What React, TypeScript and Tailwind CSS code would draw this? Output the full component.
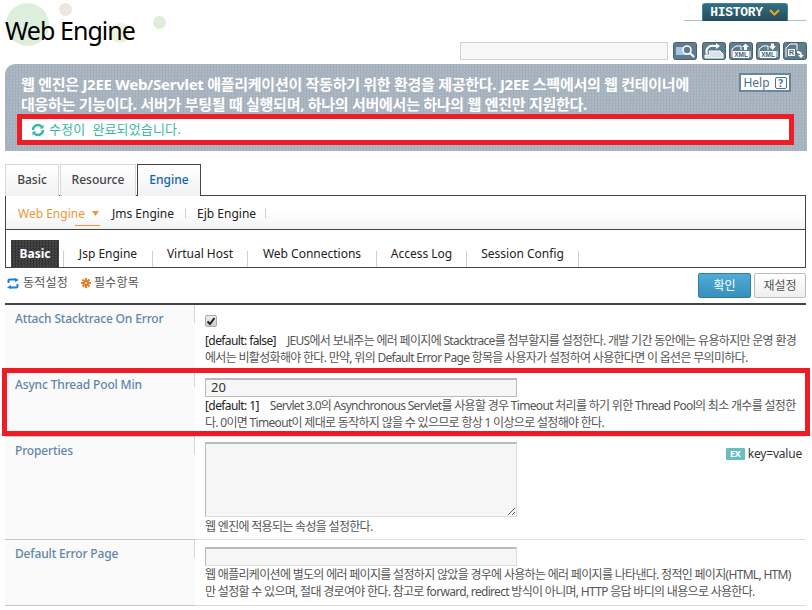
import React from 'react';

const font = { fontFamily: '"Noto Sans", "Noto Sans CJK KR", sans-serif' };

const ToolIcon: React.FC<{ className?: string; children: React.ReactNode }> = ({ className, children }) => (
  <svg width="24" height="18" viewBox="0 0 24 18" className={`shrink-0 ${className ?? ''}`}>
    <rect x="0.5" y="0.5" width="23" height="17" rx="2" fill="#5f7c8e" stroke="#46626f" />
    {children}
  </svg>
);

const XmlGlyph: React.FC<{ up?: boolean }> = ({ up }) => (
  <>
    <path d="M3 15V7l4-3h5v4" fill="none" stroke="#fff" strokeWidth="1" />
    <path d="M21 9v6" stroke="#fff" strokeWidth="1" />
    <rect x="4" y="9" width="16" height="7" fill="#fff" />
    <text x="12" y="15" textAnchor="middle" fontSize="6.5" fontWeight="700" fill="#46626f" fontFamily="Liberation Sans">XML</text>
    {up ? (
      <path d="M16.500 1.500l3.500 3.500h-2V8h-3V5h-2z" fill="#fff" />
    ) : (
      <path d="M15 1.500h3V4h2l-3.500 4L13 4h2z" fill="#fff" />
    )}
  </>
);

const Row: React.FC<{ label: string; className: string; children: React.ReactNode; boxed?: boolean }> = ({ label, className, children, boxed }) => (
  <div className={`relative flex border-b ${className}`}>
    <div className="w-[190px] shrink-0 bg-[#fafafa] flex justify-between border-b border-[#c4c4c4] -mb-px">
      <span className={`pl-[10px] ${boxed ? 'pt-[7px]' : 'pt-[5px]'} text-[12px] leading-[18px] text-[#5f86a8] font-medium tracking-[-0.15px]`}>{label}</span>
      <span className="w-px h-[18px] bg-[#d5d5d5]" />
    </div>
    <div className="flex-1 pl-[10px] min-w-0">{children}</div>
    {boxed && <div className="absolute -left-[3px] -right-[4px] -top-[1px] bottom-0 border-[5px] border-[#ee1c25]" />}
  </div>
);

const desc = 'block whitespace-nowrap text-[12px] leading-[17px] text-[#555] tracking-[-0.69px]';
const tag = 'text-[#222] mr-[11px] tracking-[-0.6px]';
const sep = 'w-px h-[16px] bg-[#d0d0d0]';

export default function App() {
  return (
    <div className="relative w-[812px] h-[610px] overflow-hidden bg-white" style={font}>
      {/* background dots behind the title */}
      <div className="absolute left-[6px] top-[3px] w-[43px] h-[43px] rounded-full bg-[#deeede]" />
      <div className="absolute left-[59px] top-[3px] w-[13px] h-[13px] rounded-full bg-[#f0e6de]" />
      <div className="absolute left-[110px] top-[23px] w-[20px] h-[20px] rounded-full bg-[#eef3dc]" />
      <div className="absolute left-[153px] top-[16px] w-[13px] h-[13px] rounded-full bg-[#dcefd8]" />

      <div className="relative h-[64px]">
        <h1 className="absolute left-[5px] top-[12px] text-[25px] leading-[36px] text-black tracking-[-0.95px]">Web Engine</h1>

        <div className="absolute left-[684px] top-[3px] w-[122px] h-[18px] border-b border-[#9cc8d6] flex justify-center">
          <div className="w-[86px] h-[18px] rounded-t-[3px] border-t border-x border-[#3f8598] bg-gradient-to-b from-[#2f7184] to-[#234a5a] flex items-center justify-center gap-[6px] text-white text-[13px] font-bold tracking-[-0.3px]" style={{ fontFamily: '"Liberation Mono", monospace' }}>
            HISTORY
            <svg width="11" height="7" viewBox="0 0 11 7"><path d="M1 1l4.500 4.500L10 1" fill="none" stroke="#f0a41e" strokeWidth="2" /></svg>
          </div>
        </div>

        <div className="absolute left-[460px] top-[42px] flex items-center">
          <input readOnly className="w-[208px] h-[18px] border border-[#d2d2d2] bg-[#f8f8f8] mr-[5px]" />
          <div className="flex gap-[3px]">
            <ToolIcon className="mr-[2px]">
              <rect x="3" y="5" width="14" height="8" fill="#a9c4e2" />
              <circle cx="14" cy="8" r="4" fill="#5f7c8e" stroke="#fff" strokeWidth="1.600" />
              <path d="M17 11l4 4" stroke="#fff" strokeWidth="2" />
            </ToolIcon>
            <ToolIcon>
              <path d="M5 12C3 7 7 3 12 4l3 0" fill="none" stroke="#fff" strokeWidth="2" />
              <path d="M14 1l4 3-4 3z" fill="#fff" />
              <path d="M7 9h11l3 3v4H3v-3h5z" fill="#d8e2e8" stroke="#fff" />
            </ToolIcon>
            <ToolIcon><XmlGlyph up /></ToolIcon>
            <ToolIcon><XmlGlyph /></ToolIcon>
            <ToolIcon>
              <path d="M3 15V6l4-4h7v6" fill="none" stroke="#fff" />
              <rect x="5" y="7" width="7" height="7" fill="#fff" />
              <text x="8.500" y="13" textAnchor="middle" fontSize="7" fontWeight="700" fill="#46626f" fontFamily="Liberation Sans">R</text>
              <path d="M14 9c3 0 5 1 5 4h2l-3 3-3-3h2c0-1-1-2-3-2z" fill="#fff" />
            </ToolIcon>
          </div>
        </div>
      </div>

      {/* description banner */}
      <div className="relative ml-[5px] w-[802px] h-[87px] rounded-tl-[10px] bg-[#a9b4be] bg-[repeating-conic-gradient(#a2aeb9_0_25%,#b0bac4_0_50%)] bg-[length:3px_3px]">
        <div className="pl-[16px] pt-[10px] text-[15px] leading-[20px] font-bold text-white whitespace-nowrap tracking-[-0.27px]">
          <div>웹 엔진은 J2EE Web/Servlet 애플리케이션이 작동하기 위한 환경을 제공한다. J2EE 스펙에서의 웹 컨테이너에</div>
          <div>대응하는 기능이다. 서버가 부팅될 때 실행되며, 하나의 서버에서는 하나의 웹 엔진만 지원한다.</div>
        </div>
        <div className="absolute left-[734px] top-[9px] w-[52px] h-[19px] bg-white border-2 border-[#68879f] flex items-center justify-center gap-[5px] text-[12px] text-[#4d6f8f]">
          Help
          <span className="w-[12px] h-[12px] border border-[#4d6f8f] rounded-[2px] flex items-center justify-center text-[10px] font-bold leading-none">?</span>
        </div>
        <div className="absolute left-[12px] top-[50px] w-[777px] h-[31px] bg-white border-[5px] border-[#ee1c25] flex items-center pl-[9px] gap-[4px] text-[#3bb7a8] text-[13px] tracking-[0.15px]">
          <svg width="14" height="14" viewBox="0 0 14 14">
            <path d="M2 7a5 5 0 0 1 8.500-3.500" fill="none" stroke="#35b5a8" strokeWidth="2.400" />
            <path d="M12 7a5 5 0 0 1-8.500 3.500" fill="none" stroke="#35b5a8" strokeWidth="2.400" />
            <path d="M8.500 5.500h4v-4z" fill="#35b5a8" />
            <path d="M5.500 8.500h-4v4z" fill="#35b5a8" />
          </svg>
          수정이&nbsp; 완료되었습니다.
        </div>
      </div>

      {/* main tabs */}
      <div className="relative z-10 mt-[13px] ml-[5px] flex h-[32px] gap-px text-[12px] font-medium -mb-px">
        <div className="w-[54px] pb-[2px] border border-b-0 border-[#d8d8d8] bg-gradient-to-b from-white to-[#f1f2f4] text-[#444] flex items-center justify-center">Basic</div>
        <div className="w-[76px] pb-[2px] border border-b-0 border-[#d8d8d8] bg-gradient-to-b from-white to-[#f1f2f4] text-[#444] flex items-center justify-center">Resource</div>
        <div className="w-[64px] pb-[2px] border border-b-0 border-[#444] bg-gradient-to-b from-white to-[#f1f2f4] text-[#0d63b0] flex items-center justify-center h-[32px]">Engine</div>
      </div>

      {/* engine selector */}
      <div className="ml-[5px] w-[801px] h-[35px] pt-[2px] border border-[#444] bg-gradient-to-b from-white from-50% to-[#f1f2f4] flex items-center pl-[12px] text-[12px] text-[#222]">
        <div className="relative flex items-center gap-[7px] text-[#e8993a] mr-[13px]">
          Web Engine
          <svg width="7" height="5" viewBox="0 0 7 5"><path d="M0 0h7L3.500 5z" fill="#e8993a" /></svg>
          <span className="absolute left-[57px] -bottom-[3px] w-[25px] h-px bg-[#e8993a]" />
        </div>
        <span>Jms Engine</span>
        <span className="w-px h-[9px] bg-[#ccc] mx-[11px]" />
        <span>Ejb Engine</span>
        <span className="w-px h-[9px] bg-[#ccc] ml-[9px]" />
      </div>

      {/* sub tabs */}
      <div className="ml-[5px] w-[801px] h-[38px] border border-t-0 border-[#444] flex items-end pl-[5px] text-[12px] text-[#222]">
        <div className="w-[48px] h-[27px] bg-[#3c3c3c] bg-[repeating-conic-gradient(#333_0_25%,#484848_0_50%)] bg-[length:3px_3px] text-white font-bold flex items-center justify-center">Basic</div>
        <span className={`${sep} ml-[4px]`} />
        <span className="w-[88px] h-[27px] flex items-center justify-center">Jsp Engine</span>
        <span className={sep} />
        <span className="w-[94px] h-[27px] flex items-center justify-center">Virtual Host</span>
        <span className={sep} />
        <span className="w-[128px] h-[27px] flex items-center justify-center">Web Connections</span>
        <span className={sep} />
        <span className="w-[89px] h-[27px] flex items-center justify-center">Access Log</span>
        <span className={sep} />
        <span className="w-[111px] h-[27px] flex items-center justify-center">Session Config</span>
        <span className={sep} />
      </div>

      {/* legend and buttons */}
      <div className="ml-[5px] w-[801px] h-[37px] flex items-start pt-[5px] border-b-2 border-[#444]">
        <div className="flex items-center h-[20px] text-[12px] text-[#555] tracking-[0.2px]">
          <svg width="12" height="11" viewBox="0 0 12 11" className="ml-[2px] mr-[4px]">
            <path d="M1.500 5V2.500a1 1 0 0 1 1-1H9M10.500 6v2.500a1 1 0 0 1-1 1H3" fill="none" stroke="#1c7fd6" strokeWidth="2" />
            <path d="M8 0l4 2-4 2zM4 7L0 9.500 4 11z" fill="#1c7fd6" />
          </svg>
          동적설정
          <svg width="10" height="10" viewBox="0 0 10 10" className="ml-[13px] mr-[3px]">
            <path d="M5 0v10M0 5h10M1.500 1.500l7 7M8.500 1.500l-7 7" stroke="#ee7c1e" strokeWidth="2" />
            <circle cx="5" cy="5" r="1" fill="#fff" />
          </svg>
          필수항목
        </div>
        <div className="ml-auto flex gap-[3px] text-[12px]">
          <div className="w-[53px] h-[25px] rounded-[2px] border border-[#2d7fa8] bg-gradient-to-b from-[#4fadd8] to-[#388fba] text-white flex items-center justify-center">확인</div>
          <div className="w-[52px] h-[25px] rounded-[2px] border border-[#bbb] bg-gradient-to-b from-white to-[#efefef] text-[#555] flex items-center justify-center">재설정</div>
        </div>
      </div>

      {/* settings rows */}
      <div className="ml-[5px] w-[801px]">
        <Row label="Attach Stacktrace On Error" className="h-[64px] border-[#ddd]">
          <div className="mt-[10px] mb-[5px] w-[12px] h-[12px] rounded-[2px] border border-[#aaa] bg-gradient-to-b from-[#eee] to-[#ccc] flex items-center justify-center">
            <svg width="10" height="10" viewBox="0 0 10 10"><path d="M1.500 5.500l2.500 2.500 4.500-6" fill="none" stroke="#222" strokeWidth="2" /></svg>
          </div>
          <span className={desc}><span className={tag}>[default: false]</span>JEUS에서 보내주는 에러 페이지에 Stacktrace를 첨부할지를 설정한다. 개발 기간 동안에는 유용하지만 운영 환경</span>
          <span className={desc}>에서는 비활성화해야 한다. 만약, 위의 Default Error Page 항목을 사용자가 설정하여 사용한다면 이 옵션은 무의미하다.</span>
        </Row>
        <Row label="Async Thread Pool Min" boxed className="h-[68px] border-[#ddd]">
          <input readOnly value="20" className="block mt-[9px] w-[312px] h-[19px] border border-[#bbb] border-t-2 bg-[#f6f6f6] pl-[5px] text-[13px] text-[#333]" />
          <span className={desc}><span className={tag}>[default: 1]</span>Servlet 3.0의 Asynchronous Servlet를 사용할 경우 Timeout 처리를 하기 위한 Thread Pool의 최소 개수를 설정한</span>
          <span className={desc}>다. 0이면 Timeout이 제대로 동작하지 않을 수 있으므로 항상 1 이상으로 설정해야 한다.</span>
        </Row>
        <Row label="Properties" className="h-[103px] border-[#ddd]">
          <textarea readOnly className="block mt-[5px] w-[312px] h-[75px] border border-[#ddd] border-l-[#bbb] border-t-[#bbb] border-t-2 bg-[#f6f6f6]" />
          <span className={`${desc} mt-[1px]`}>웹 엔진에 적용되는 속성을 설정한다.</span>
          <div className="absolute right-[4px] top-[8px] flex items-center gap-[3px] text-[12px] text-[#333] tracking-[-0.2px]">
            <span className="w-[19px] h-[12px] rounded-[1px] bg-[#69bfc0] text-white text-[9px] font-bold leading-[12px] text-center">EX</span>
            key=value
          </div>
        </Row>
        <Row label="Default Error Page" className="h-[66px] border-[#ddd]">
          <input readOnly className="block mt-[7px] w-[312px] h-[19px] border border-[#ddd] border-t-2 border-t-[#bbb] border-l-[#bbb] bg-[#f6f6f6]" />
          <span className={desc}>웹 애플리케이션에 별도의 에러 페이지를 설정하지 않았을 경우에 사용하는 에러 페이지를 나타낸다. 정적인 페이지(HTML, HTM)</span>
          <span className={desc}>만 설정할 수 있으며, 절대 경로여야 한다. 참고로 forward, redirect 방식이 아니며, HTTP 응답 바디의 내용으로 사용한다.</span>
        </Row>
      </div>
    </div>
  );
}
